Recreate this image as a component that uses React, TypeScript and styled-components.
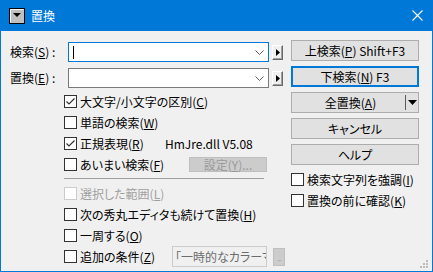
import React from 'react';
import styled, { createGlobalStyle } from 'styled-components';

const BLUE = '#0078d7';
const FACE = '#f0f0f0';
const FONT = `"Noto Sans CJK JP", "Noto Sans", sans-serif`;

const GlobalStyle = createGlobalStyle`
  html, body { margin: 0; padding: 0; background: ${FACE}; }
  body {
    font-family: ${FONT};
    font-size: 12px;
    color: #000;
    font-feature-settings: "palt";
  }
  * { box-sizing: border-box; }
  button { font-feature-settings: "palt"; }
  u { text-underline-offset: 1px; }
`;

const Window = styled.div`
  width: 433px;
  height: 272px;
  border: 1px solid ${BLUE};
  border-top: none;
  background: ${FACE};
  display: flex;
  flex-direction: column;
  position: relative;
  overflow: hidden;
`;

const TitleBar = styled.div`
  height: 31px;
  margin: 0 -1px;
  background: ${BLUE};
  display: flex;
  align-items: center;
  padding: 0 10px 0 9px;
  gap: 6px;
  color: #fff;
  font-size: 12px;
  line-height: 1;
`;

const TitleText = styled.span`
  flex: 1;
`;

const Body = styled.div`
  flex: 1;
  display: flex;
  padding-top: 9px;
`;

const LeftPane = styled.div`
  width: 290px;
  padding: 2px 0 0 9px;
  display: flex;
  flex-direction: column;
`;

const FieldRow = styled.div`
  display: flex;
  align-items: center;
  height: 20px;
  margin-bottom: 6px;
`;

const FieldLabel = styled.label`
  width: 58px;
  line-height: 1;
`;

const Combo = styled.div<{ $focused?: boolean }>`
  width: 201px;
  height: 20px;
  background: #fff;
  border: 1px solid ${(p) => (p.$focused ? BLUE : '#7a7a7a')};
  display: flex;
  align-items: center;
  padding: 0 4px 0 4px;
`;

const Caret = styled.span`
  width: 1px;
  height: 13px;
  background: #000;
`;

const ComboArrow = styled.svg`
  margin-left: auto;
`;

const ArrowButton = styled.button`
  width: 11px;
  height: 15px;
  margin-left: 3px;
  padding: 0;
  background: ${FACE};
  border: 1px solid;
  border-color: #fff #696969 #696969 #fff;
  box-shadow: inset -1px -1px 0 #a0a0a0;
  display: flex;
  align-items: center;
  justify-content: center;
`;

const CheckList = styled.div<{ $indent?: number; $top?: number }>`
  display: flex;
  flex-direction: column;
  margin-left: ${(p) => p.$indent ?? 0}px;
  margin-top: ${(p) => p.$top ?? 0}px;
`;

const CheckRow = styled.div`
  display: flex;
  align-items: center;
  height: 21px;
`;

const CheckItem = styled.label<{ $w?: number; $disabled?: boolean }>`
  display: flex;
  align-items: center;
  gap: 3px;
  ${(p) => (p.$w ? `width: ${p.$w}px; flex: none;` : '')}
  color: ${(p) => (p.$disabled ? '#a0a0a0' : '#000')};
  line-height: 1;
  white-space: nowrap;
`;

const Box = styled.span<{ $disabled?: boolean }>`
  width: 13px;
  height: 13px;
  flex: none;
  background: #fff;
  border: 1px solid ${(p) => (p.$disabled ? '#cccccc' : '#333333')};
  display: flex;
  align-items: center;
  justify-content: center;
`;

const Info = styled.span`
  line-height: 1;
  white-space: nowrap;
`;

const DisabledButton = styled.button`
  width: 78px;
  height: 15px;
  padding: 0;
  background: #cccccc;
  border: 1px solid #bfbfbf;
  color: #9a9a9a;
  font-family: ${FONT};
  font-size: 12px;
  line-height: 1;
  display: flex;
  align-items: center;
  justify-content: center;
`;

const Separator = styled.div`
  width: 200px;
  height: 1px;
  background: #a0a0a0;
  margin: 3px 0 4px 54px;
`;

const ReadOnlyField = styled.div`
  width: 95px;
  height: 21px;
  border: 1px solid #cccccc;
  background: ${FACE};
  color: #6d6d6d;
  padding: 0 0 0 2px;
  display: flex;
  align-items: center;
  overflow: hidden;
  white-space: nowrap;
  line-height: 1;
`;

const EllipsisButton = styled.button`
  width: 12px;
  height: 18px;
  margin-left: 6px;
  padding: 0 0 3px;
  background: #cccccc;
  border: 1px solid #bfbfbf;
  color: #8a8a8a;
  font-family: ${FONT};
  font-size: 6px;
  letter-spacing: -0.5px;
  line-height: 1;
  display: flex;
  align-items: flex-end;
  justify-content: center;
  overflow: hidden;
`;

const RightPane = styled.div`
  width: 128px;
  display: flex;
  flex-direction: column;
  gap: 5px;
`;

const Button = styled.button<{ $default?: boolean }>`
  height: 21px;
  padding: 0;
  background: #e1e1e1;
  border: ${(p) => (p.$default ? `2px solid ${BLUE}` : '1px solid #adadad')};
  font-family: ${FONT};
  font-size: 12px;
  color: #000;
  line-height: 1;
  display: flex;
  align-items: center;
  justify-content: center;
  white-space: pre;
`;

const SplitButton = styled(Button)`
  justify-content: flex-start;
`;

const SplitLabel = styled.span`
  flex: 1;
  text-align: center;
  padding-left: 4px;
`;

const SplitDivider = styled.span`
  width: 1px;
  height: 15px;
  background: #5a5a5a;
`;

const SplitArrow = styled.span`
  width: 12px;
  display: flex;
  justify-content: center;
`;

const RightChecks = styled.div`
  margin-top: -1px;
  display: flex;
  flex-direction: column;
`;

const Grip = styled.svg`
  position: absolute;
  right: 3px;
  bottom: 2px;
`;

const Check = () => (
  <svg width="11" height="11" viewBox="0 0 11 11">
    <polyline points="1.5,5.5 4,8 9.5,2.5" fill="none" stroke="#333" strokeWidth="1.2" />
  </svg>
);

const CheckBox: React.FC<{
  checked?: boolean;
  disabled?: boolean;
  w?: number;
  children: React.ReactNode;
}> = ({ checked, disabled, w, children }) => (
  <CheckItem $w={w} $disabled={disabled}>
    <Box $disabled={disabled}>{checked && <Check />}</Box>
    <span>{children}</span>
  </CheckItem>
);

const RightTri = () => (
  <svg width="4" height="7" viewBox="0 0 4 7">
    <polygon points="0,0 4,3.5 0,7" fill="#000" />
  </svg>
);

const ComboField: React.FC<{ label: React.ReactNode; focused?: boolean }> = ({ label, focused }) => (
  <FieldRow>
    <FieldLabel>{label}</FieldLabel>
    <Combo $focused={focused}>
      {focused && <Caret />}
      <ComboArrow width="9" height="5" viewBox="0 0 9 5">
        <polyline points="0.5,0.5 4.5,4.5 8.5,0.5" fill="none" stroke="#606060" strokeWidth="1" />
      </ComboArrow>
    </Combo>
    <ArrowButton>
      <RightTri />
    </ArrowButton>
  </FieldRow>
);

export default function App() {
  return (
    <>
      <GlobalStyle />
      <Window>
        <TitleBar>
          <svg width="16" height="16" viewBox="0 0 16 16">
            <rect x="0.5" y="0.5" width="15" height="15" fill="#c0c0c0" stroke="#000" />
            <path d="M1.5 14.5V1.5H14.5" fill="none" stroke="#fff" />
            <polygon points="4,5 12,5 8,9" fill="#000" />
          </svg>
          <TitleText>置換</TitleText>
          <svg width="11" height="11" viewBox="0 0 11 11">
            <path d="M0.5 0.5L10.5 10.5M10.5 0.5L0.5 10.5" stroke="#fff" strokeWidth="1.1" />
          </svg>
        </TitleBar>
        <Body>
          <LeftPane>
            <ComboField focused label={<>検索(<u>S</u>) :</>} />
            <ComboField label={<>置換(<u>E</u>) :</>} />
            <CheckList $indent={54} $top={-3}>
              <CheckRow>
                <CheckBox checked>大文字/小文字の区別(<u>C</u>)</CheckBox>
              </CheckRow>
              <CheckRow>
                <CheckBox>単語の検索(<u>W</u>)</CheckBox>
              </CheckRow>
              <CheckRow>
                <CheckBox checked w={101}>正規表現(<u>R</u>)</CheckBox>
                <Info>HmJre.dll V5.08</Info>
              </CheckRow>
              <CheckRow>
                <CheckBox w={125}>あいまい検索(<u>F</u>)</CheckBox>
                <DisabledButton>設定(<u>Y</u>)...</DisabledButton>
              </CheckRow>
            </CheckList>
            <Separator />
            <CheckList $indent={54}>
              <CheckRow>
                <CheckBox disabled>選択した範囲(<u>L</u>)</CheckBox>
              </CheckRow>
              <CheckRow>
                <CheckBox>次の秀丸エディタも続けて置換(<u>H</u>)</CheckBox>
              </CheckRow>
              <CheckRow>
                <CheckBox>一周する(<u>O</u>)</CheckBox>
              </CheckRow>
              <CheckRow>
                <CheckBox w={108}>追加の条件(<u>Z</u>)</CheckBox>
                <ReadOnlyField>「一時的なカラーマ</ReadOnlyField>
                <EllipsisButton>...</EllipsisButton>
              </CheckRow>
            </CheckList>
          </LeftPane>
          <RightPane>
            <Button>上検索(<u>P</u>) Shift+F3</Button>
            <Button $default>下検索(<u>N</u>) F3</Button>
            <SplitButton>
              <SplitLabel>全置換(<u>A</u>)</SplitLabel>
              <SplitDivider />
              <SplitArrow>
                <svg width="9" height="5" viewBox="0 0 9 5">
                  <polygon points="0,0 9,0 4.5,5" fill="#000" />
                </svg>
              </SplitArrow>
            </SplitButton>
            <Button>キャンセル</Button>
            <Button>ヘルプ</Button>
            <RightChecks>
              <CheckRow>
                <CheckBox>検索文字列を強調(<u>I</u>)</CheckBox>
              </CheckRow>
              <CheckRow>
                <CheckBox>置換の前に確認(<u>K</u>)</CheckBox>
              </CheckRow>
            </RightChecks>
          </RightPane>
        </Body>
        <Grip width="9" height="9" viewBox="0 0 9 9">
          <rect x="6" y="0" width="2" height="2" fill="#bcbcbc" />
          <rect x="3" y="3" width="2" height="2" fill="#bcbcbc" />
          <rect x="6" y="3" width="2" height="2" fill="#bcbcbc" />
          <rect x="0" y="6" width="2" height="2" fill="#bcbcbc" />
          <rect x="3" y="6" width="2" height="2" fill="#bcbcbc" />
          <rect x="6" y="6" width="2" height="2" fill="#bcbcbc" />
        </Grip>
      </Window>
    </>
  );
}
